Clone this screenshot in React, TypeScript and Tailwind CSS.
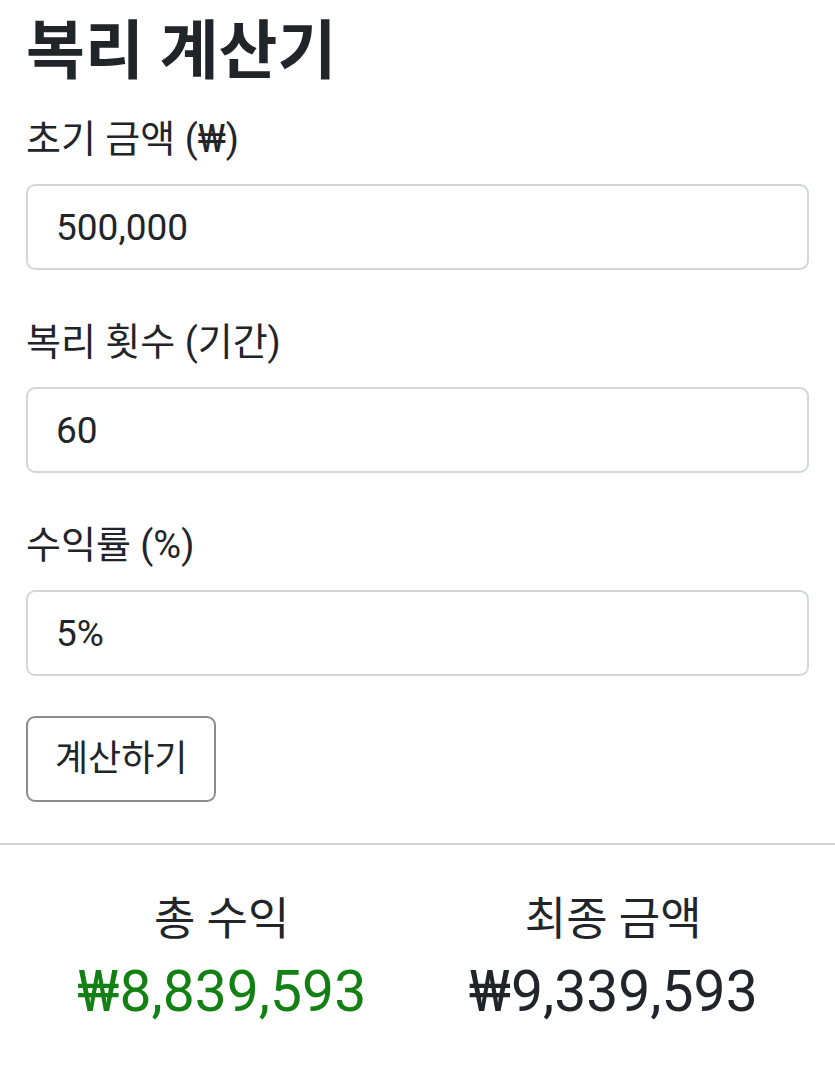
import { useState } from 'react';

const FONT = { fontFamily: 'Roboto, "Noto Sans CJK KR", sans-serif' };

function Field({ label, value }: { label: string; value: string }) {
  return (
    <div className="mb-[45px]">
      <label className="block text-[38px] leading-[54px] mb-[18px] text-[#212529]">{label}</label>
      <input
        readOnly
        value={value}
        className="block w-full h-[86px] px-[28px] text-[37px] leading-[54px] text-[#212529] bg-white border-2 border-[#d3d6da] rounded-[9px] outline-none"
        style={FONT}
      />
    </div>
  );
}

export default function App() {
  const [principal] = useState('500,000');
  const [periods] = useState('60');
  const [rate] = useState('5%');

  return (
    <div className="min-h-screen bg-white text-[#212529]" style={FONT}>
      <div className="px-[26px] pt-[16px]">
        {/* Title */}
        <h1 className="text-[64px] leading-[72px] font-bold mb-[24px]">복리 계산기</h1>

        <Field label="초기 금액 (₩)" value={principal} />
        <Field label="복리 횟수 (기간)" value={periods} />
        <Field label="수익률 (%)" value={rate} />

        <button
          className="block h-[86px] px-[27px] text-[36px] leading-[54px] text-[#212529] bg-white border-2 border-[#8c8c8c] rounded-[9px] -mt-[5px]"
          style={FONT}
        >
          계산하기
        </button>
      </div>

      <hr className="mt-[41px] border-0 h-[2px] bg-[#d2d2d2]" />

      {/* Results */}
      <div className="px-[26px] pt-[41px] grid grid-cols-2 text-center">
        <div>
          <div className="text-[45px] leading-[68px]">총 수익</div>
          <div className="mt-[4px] text-[57px] leading-[68px] text-[#128012]">₩8,839,593</div>
        </div>
        <div>
          <div className="text-[45px] leading-[68px]">최종 금액</div>
          <div className="mt-[4px] text-[57px] leading-[68px]">₩9,339,593</div>
        </div>
      </div>
    </div>
  );
}
